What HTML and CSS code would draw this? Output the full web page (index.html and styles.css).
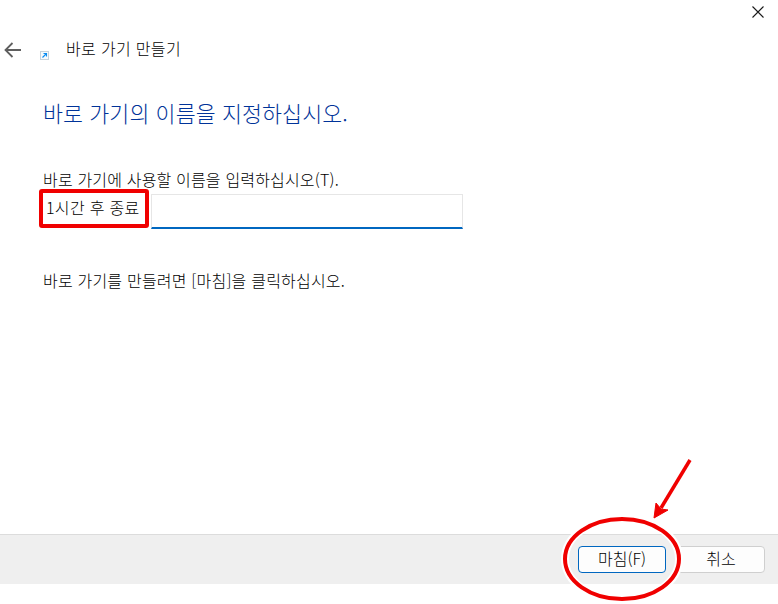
FILE: index.html
```html
<!DOCTYPE html>
<html lang="ko">
<head>
<meta charset="utf-8">
<title>바로 가기 만들기</title>
<link rel="stylesheet" href="styles.css">
</head>
<body>
<div class="window">
  <div class="close-row">
    <svg class="close" width="12" height="12" viewBox="0 0 12 12"><path d="M0.5 0.5L11.5 11.5M11.5 0.5L0.5 11.5" stroke="#1a1a1a" stroke-width="1.1" fill="none"/></svg>
  </div>
  <div class="nav">
    <svg class="back" width="17" height="16" viewBox="0 0 17 16"><path d="M17 8H1.5M8.5 1L1.5 8l7 7" stroke="#5f5f5f" stroke-width="1.8" fill="none"/></svg>
    <svg class="shortcut" width="9" height="9" viewBox="0 0 9 9"><rect x="0.5" y="0.5" width="8" height="8" fill="#f6fafd" stroke="#c8d2da"/><path d="M2.5 6.5L6 3M3.5 2.5H6.5V5.5" stroke="#0a8cf0" stroke-width="1.1" fill="none"/></svg>
    <span class="nav-title">바로 가기 만들기</span>
  </div>
  <main class="content">
    <h1 class="heading">바로 가기의 이름을 지정하십시오.</h1>
    <p class="label">바로 가기에 사용할 이름을 입력하십시오(T).</p>
    <div class="name-row">
      <div class="name-tag">1시간 후 종료</div>
      <div class="name-field"></div>
    </div>
    <p class="hint">바로 가기를 만들려면 [마침]을 클릭하십시오.</p>
  </main>
  <footer class="footer">
    <button class="btn btn-primary">마침(F)</button>
    <button class="btn">취소</button>
  </footer>
  <div class="bottom-gap"></div>

  <svg class="marks" width="778" height="604" viewBox="0 0 778 604">
    <ellipse cx="622" cy="559" rx="57" ry="41" fill="none" stroke="#fff" stroke-width="8"/>
    <ellipse cx="622" cy="559" rx="57" ry="40" fill="none" stroke="#f00000" stroke-width="4"/>
    <path d="M690 460L661 508" stroke="#f00000" stroke-width="3.5" fill="none"/>
    <path d="M654 518L656 503L661 509L668 510Z" fill="#f00000" stroke="#f00000"/>
  </svg>
</div>
</body>
</html>
```
FILE: styles.css
```css
* { box-sizing: border-box; }
html, body { margin: 0; padding: 0; background: #fff; }
body { font-family: "Noto Sans CJK KR", "Noto Sans", sans-serif; font-weight: 400; color: #000; }
.window { position: relative; width: 778px; height: 604px; display: flex; flex-direction: column; overflow: hidden; background: #fff; }
.close-row { height: 35px; display: flex; justify-content: flex-end; padding: 6px 14px 0 0; }
.close { display: block; }
.nav { height: 30px; display: flex; align-items: center; padding-left: 4px; }
.back { flex: none; }
.shortcut { flex: none; margin: 11px 0 0 19px; }
.nav-title { margin: 0 0 4px 17px; font-size: 16px; font-weight: 300; line-height: 26px; letter-spacing: 0.33px; }
.content { flex: 1; padding: 0 0 0 43px; }
.heading { margin: 33px 0 0; font-size: 21.7px; line-height: 30px; font-weight: 300; color: #003399; letter-spacing: 0.1px; }
.label { margin: 41px 0 0; font-size: 16px; font-weight: 300; line-height: 20px; letter-spacing: 0.17px; }
.name-row { display: flex; margin: 0 0 0 -4px; height: 40px; align-items: flex-start; }
.name-tag { flex: none; width: 110px; height: 39px; border: 4px solid #f00000; border-radius: 3px; padding-left: 3px; font-size: 16px; font-weight: 300; line-height: 28px; letter-spacing: 0.3px; white-space: nowrap; }
.name-field { flex: none; width: 312px; height: 35px; margin: 5px 0 0 2px; border: 1px solid #e6e6e6; border-bottom: 2px solid #0067c0; }
.hint { margin: 41px 0 0; font-size: 16px; font-weight: 300; line-height: 20px; letter-spacing: 0.2px; }
.footer { height: 50px; flex: none; background: #efefef; border-top: 1px solid #dcdcdc; display: flex; justify-content: flex-end; align-items: center; gap: 11px; padding: 0 13px 0 0; }
.btn { width: 88px; height: 27px; padding: 0 0 2px; font: 300 16px/23px "Noto Sans CJK KR", sans-serif; color: #000; background: #fdfdfd; border: 1px solid #cfcfcf; border-radius: 4px; }
.btn-primary { border-color: #0067c0; }
.bottom-gap { height: 20px; flex: none; }
.marks { position: absolute; left: 0; top: 0; pointer-events: none; }
```
